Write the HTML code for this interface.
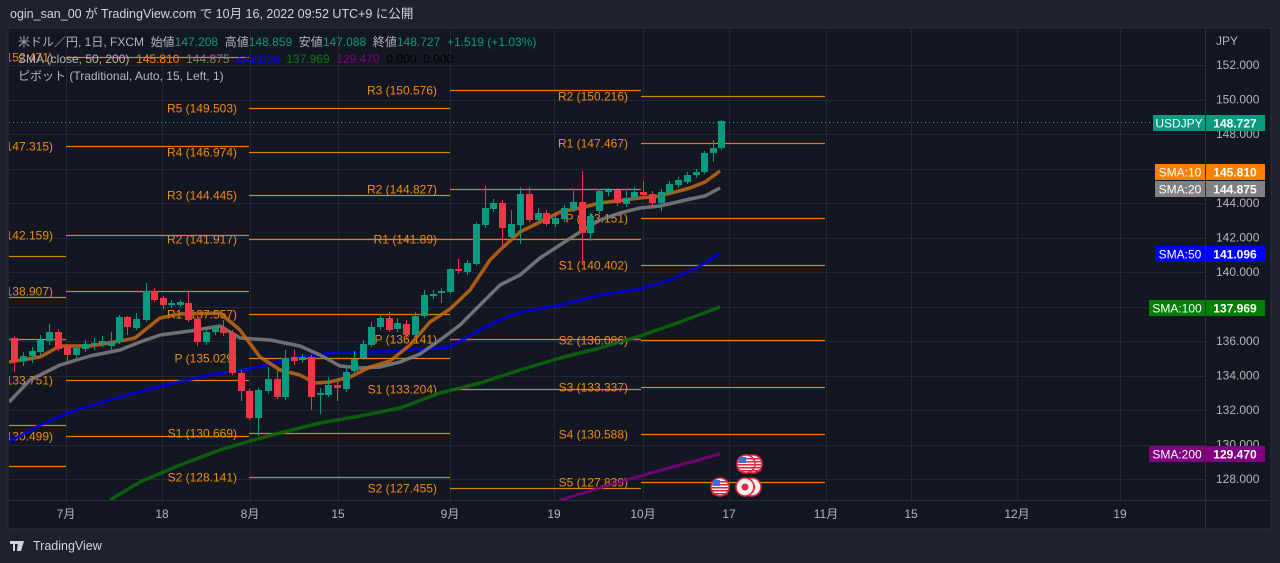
<!DOCTYPE html>
<html><head><meta charset="utf-8">
<style>
html,body{margin:0;padding:0;background:#1e222d;width:1280px;height:563px;overflow:hidden;font-family:"Liberation Sans","Noto Sans CJK JP",sans-serif;}
svg{position:absolute;left:0;top:0}
</style></head>
<body>
<svg id="c" width="1280" height="563" xmlns="http://www.w3.org/2000/svg" font-family="Liberation Sans, Noto Sans CJK JP, sans-serif">
<rect x="0" y="0" width="1280" height="563" fill="#1e222d"/>
<text x="10" y="18" fill="#d1d4dc" font-size="12.5">ogin_san_00 が TradingView.com で 10月 16, 2022 09:52 UTC+9 に公開</text>
<rect x="8" y="28" width="1263" height="501" fill="#131722" stroke="#2a2e39"/>
<g id="grid" stroke="#232733" stroke-width="1"></g>
<defs><clipPath id="pc"><rect x="9" y="29" width="1196" height="471"/></clipPath></defs>
<g id="plot" clip-path="url(#pc)"></g>
<line x1="1205.5" y1="29" x2="1205.5" y2="528" stroke="#2a2e39"/>
<line x1="9" y1="500.5" x2="1270" y2="500.5" stroke="#2a2e39"/>
<g id="axis" fill="#b2b5be" font-size="12"></g>
<g id="legend" font-size="12" xml:space="preserve">
<text x="18" y="46" fill="#b2b5be" xml:space="preserve">米ドル／円, 1日, FXCM  始値<tspan fill="#089981">147.208</tspan>  高値<tspan fill="#089981">148.859</tspan>  安値<tspan fill="#089981">147.088</tspan>  終値<tspan fill="#089981">148.727</tspan>  <tspan fill="#089981">+1.519 (+1.03%)</tspan></text>
<text x="18" y="63" fill="#b2b5be" xml:space="preserve">SMA (close, 50, 200)  <tspan fill="#ff7f00">145.810</tspan>  <tspan fill="#808080">144.875</tspan>  <tspan fill="#0000ff">141.096</tspan>  <tspan fill="#008000">137.969</tspan>  <tspan fill="#800080">129.470</tspan>  <tspan fill="#000">0.000</tspan>  <tspan fill="#000">0.000</tspan></text>
<text x="18" y="80" fill="#b2b5be">ピボット (Traditional, Auto, 15, Left, 1)</text>
</g>
<g id="tags" font-size="12" font-weight="bold"></g>
<g transform="translate(10,539)" fill="#d1d4dc"><path d="M0 2h8v3H5v7H3V5H0z M8 2h3l-1 10H7z M11 2h3l-3 10H9z"/></g>
<text x="33" y="550" fill="#d1d4dc" font-size="12.5">TradingView</text>
</svg>
<script>
var ns="http://www.w3.org/2000/svg";
function el(p,t,a,txt){var e=document.createElementNS(ns,t);for(var k in a)e.setAttribute(k,a[k]);if(txt!=null)e.textContent=txt;document.getElementById(p).appendChild(e);return e;}
function Y(p){return 65+(152-p)*17.25;}
for(var p=128;p<=152;p+=2){var y=Math.round(Y(p))+0.5;el('grid','line',{x1:9,x2:1205,y1:y,y2:y});
 el('axis','text',{x:1216,y:Y(p)+4},p.toFixed(3));}
el('axis','text',{x:1216,y:45},'JPY');
var tx=[[66,'7月'],[162,'18'],[250,'8月'],[338,'15'],[450,'9月'],[554,'19'],[643,'10月'],[729,'17'],[826,'11月'],[911,'15'],[1017,'12月'],[1120,'19']];
tx.forEach(function(t){el('grid','line',{x1:t[0]+.5,x2:t[0]+.5,y1:29,y2:500});el('axis','text',{x:t[0],y:518,'text-anchor':'middle'},t[1]);});
var OR='#e07f10',OT='#f08a12';
function seg(x1,x2,price,label,lx){var y=Math.round(Y(price))+0.5;el('plot','line',{x1:x1,x2:x2,y1:y,y2:y,stroke:OR,'stroke-width':1.3});
 if(label)el('plot','text',{x:lx,y:y+4,fill:OT,'font-size':12,'text-anchor':'end'},label);}
[256,297,339,425,466].forEach(function(y){el('plot','line',{x1:9,x2:66,y1:y+.5,y2:y+.5,stroke:OR,'stroke-width':1.3});});
[[152.471],[147.315],[142.159],[138.907],[133.751],[130.499]].forEach(function(a){seg(66,249,a[0],'('+a[0].toFixed(3)+')',53);});
[['R5',149.503],['R4',146.974],['R3',144.445],['R2',141.917],['R1',137.557],['P',135.029],['S1',130.669],['S2',128.141]].forEach(function(a){seg(249,450,a[1],a[0]+' ('+a[1].toFixed(3)+')',237);});
[['R3',150.576,'150.576'],['R2',144.827,'144.827'],['R1',141.89,'141.89'],['P',136.141,'136.141'],['S1',133.204,'133.204'],['S2',127.455,'127.455']].forEach(function(a){seg(450,641,a[1],a[0]+' ('+a[2]+')',437);});
[['R2',150.216],['R1',147.467],['P',143.151],['S1',140.402],['S2',136.086],['S3',133.337],['S4',130.588],['S5',127.839]].forEach(function(a){seg(641,825,a[1],a[0]+' ('+a[1].toFixed(3)+')',628);});
function pl(pts,c,w){el('plot','polyline',{points:pts.map(function(p){return p.join(',')}).join(' '),fill:'none',stroke:c,'stroke-width':w,'stroke-linejoin':'round','stroke-opacity':0.85});}
pl([[560,500],[600,488],[640,476],[680,465],[720,454]],'#800080',3);
pl([[110,500],[140,482],[180,465],[220,450],[250,441],[280,433],[320,423],[360,416],[400,408],[440,393],[480,383],[520,370],[560,358],[600,348],[640,336],[680,322],[720,307]],'#0a6a0a',3.5);
pl([[9,442],[40,425],[70,412],[100,403],[130,394],[170,384],[210,375],[250,369],[290,359],[330,353],[370,352],[410,350],[450,347],[480,330],[500,320],[520,312],[560,305],[600,295],[640,289],[670,280],[700,266],[720,253]],'#0000e0',3);
pl([[9,402],[30,380],[60,365],[90,356],[120,350],[140,342],[160,335],[190,331],[220,326],[240,338],[270,340],[300,346],[320,355],[340,366],[360,368],[380,367],[400,362],[420,354],[440,340],[460,325],[480,305],[500,285],[520,275],[540,258],[560,245],[580,232],[600,220],[620,213],[640,208],[660,206],[690,199],[705,196],[720,188]],'#808080',3.5);
pl([[9,362],[40,357],[60,346],[90,346],[120,341],[135,338],[160,318],[180,314],[220,313],[240,330],[260,357],[280,370],[300,375],[315,383],[330,382],[350,377],[370,367],[390,361],[410,345],[430,322],[450,309],[470,290],[490,260],[500,250],[520,232],[540,222],[560,212],[580,208],[600,203],[640,198],[660,196],[690,188],[705,182],[720,171]],'#c8680f',3.5);
var C=[[14,338,362,'r',336,372],[23,356,361,'g',352,366],[32,351,356,'g',347,363],[40,340,352,'g',335,356],[49,332,341,'g',324,345],[58,332,349,'r',329,351],[67,347,355,'r',344,363],[76,348,355,'g',345,358],[85,344,349,'g',340,352],[94,343,345,'g',338,350],[102,341,344,'g',336,347],[111,342,346,'g',332,352],[119,317,342,'g',315,344],[127,317,327,'r',316,335],[136,319,328,'g',313,330],[146,291,320,'g',283,322],[154,291,300,'r',288,302],[163,298,305,'r',296,309],[171,303,305,'g',300,308],[180,302,305,'g',300,307],[188,303,320,'r',292,322],[197,319,342,'r',317,346],[206,332,342,'g',330,345],[215,328,332,'g',326,335],[223,328,333,'r',320,336],[232,333,373,'r',330,375],[241,373,391,'r',370,401],[249,391,418,'r',389,420],[258,390,418,'g',388,436],[268,379,391,'g',367,394],[277,379,397,'r',370,399],[285,358,397,'g',350,400],[294,357,361,'r',350,365],[302,357,360,'g',354,363],[311,357,397,'r',355,410],[320,393,395,'g',388,414],[328,385,395,'g',377,397],[337,385,388,'r',380,401],[346,372,389,'g',368,392],[354,359,371,'g',351,375],[363,344,358,'g',340,360],[371,327,345,'g',322,347],[380,318,327,'g',314,330],[389,318,330,'r',312,332],[397,323,329,'g',318,332],[406,324,335,'r',320,338],[415,316,335,'g',312,338],[424,295,316,'g',290,318],[433,294,296,'g',290,299],[441,291,293,'g',288,303],[450,269,292,'g',268,294],[458,269,271,'r',259,274],[467,263,272,'g',260,275],[476,224,264,'g',222,266],[485,208,225,'g',186,228],[493,203,209,'g',199,212],[502,203,228,'r',200,246],[511,224,237,'g',210,240],[520,194,225,'g',187,244],[529,194,220,'r',187,222],[538,213,220,'g',208,223],[546,213,224,'r',210,226],[555,218,224,'g',212,227],[564,208,219,'g',205,222],[573,202,209,'g',191,212],[582,202,233,'r',171,265],[590,216,233,'g',213,241],[599,191,211,'g',189,214],[608,190,192,'g',188,196],[617,190,203,'r',188,206],[626,198,204,'g',191,207],[634,192,198,'g',187,200],[643,192,195,'r',181,197],[652,194,203,'r',191,205],[661,192,203,'g',189,211],[669,184,193,'g',181,195],[678,180,185,'g',177,188],[687,175,182,'g',172,184],[696,172,175,'g',169,178],[704,153,172,'g',151,174],[713,148,153,'g',140,162],[721,121,148,'g',120,150]];
C.forEach(function(c){var col=c[3]=='g'?'#089981':'#f23645';
 el('plot','line',{x1:c[0]+.5,x2:c[0]+.5,y1:c[4],y2:c[5],stroke:col,'stroke-width':1});
 el('plot','rect',{x:c[0]-3,y:c[1],width:7,height:Math.max(1,c[2]-c[1]),fill:col});});
el('plot','line',{x1:9,x2:1153,y1:122.5,y2:122.5,stroke:'#16b39a','stroke-dasharray':'1,3'});
function us(x,y){el('plot','circle',{cx:x,cy:y,r:9,fill:'#f2f2f2',stroke:'#e0283c','stroke-width':1.6});
 for(var i=-6;i<=6;i+=3)el('plot','rect',{x:x-8,y:y+i,width:16,height:1.5,fill:'#e0283c'});
 el('plot','rect',{x:x-7,y:y-7,width:7,height:6,fill:'#3c6ed8'});}
function jp(x,y){el('plot','circle',{cx:x,cy:y,r:9,fill:'#f2f2f2',stroke:'#e0283c','stroke-width':1.6});el('plot','circle',{cx:x,cy:y,r:3.5,fill:'#e0283c'});}
us(753,464);us(746,464);us(720,487);jp(752,487);jp(745,487);
function tag(x,y,w,col,l,v){el('tags','rect',{x:x,y:y,width:w,height:16,fill:col});el('tags','rect',{x:1206,y:y,width:59,height:16,fill:col});
 el('tags','text',{x:x+w/2,y:y+12.5,fill:'#fff','text-anchor':'middle','font-weight':'normal'},l);el('tags','text',{x:1235,y:y+12.5,fill:'#fff','text-anchor':'middle'},v);}
tag(1153,115,52,'#089981','USDJPY','148.727');
tag(1155,164,50,'#ff7f00','SMA:10','145.810');
tag(1155,181,50,'#808080','SMA:20','144.875');
tag(1155,246,50,'#0000ff','SMA:50','141.096');
tag(1149,300,56,'#008000','SMA:100','137.969');
tag(1149,446,56,'#800080','SMA:200','129.470');
</script>
</body></html>
